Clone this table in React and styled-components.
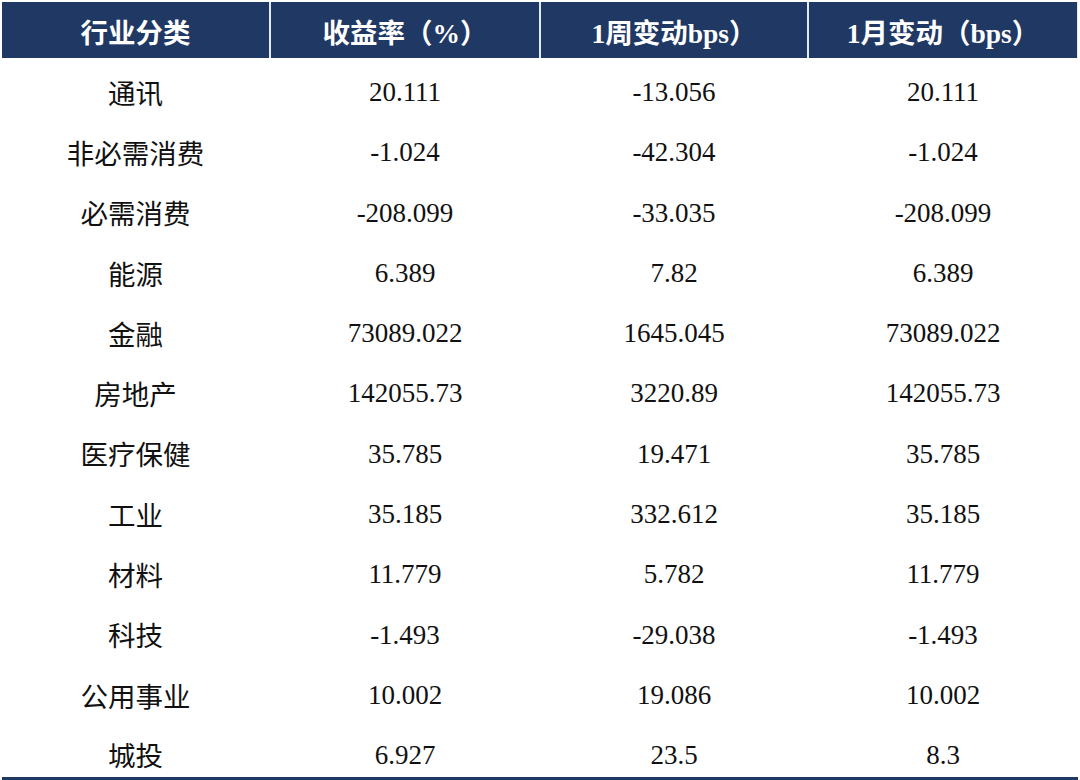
import React from 'react';
import styled, { createGlobalStyle } from 'styled-components';

const GlobalStyle = createGlobalStyle`
  html, body {
    margin: 0;
    padding: 0;
    background: #ffffff;
  }
  body {
    font-family: 'Liberation Serif', 'Noto Sans CJK SC', serif;
  }
`;

const Table = styled.div`
  width: 1080px;
  height: 780px;
  box-sizing: border-box;
  padding: 2px 2px 0 2px;
  display: flex;
  flex-direction: column;
  background: #ffffff;
`;

const HeaderRow = styled.div`
  display: grid;
  grid-template-columns: 267px 268px 266px 268px;
  column-gap: 2px;
  height: 56px;
  background: #e4eaf3;
  flex-shrink: 0;
`;

const HeaderCell = styled.div`
  background: #1f3864;
  color: #ffffff;
  font-family: 'Liberation Serif', 'Noto Sans CJK SC', serif;
  font-weight: bold;
  font-size: 27.5px;
  display: flex;
  align-items: center;
  justify-content: center;
  padding-top: 2px;
  box-sizing: border-box;
`;

const Body = styled.div`
  display: flex;
  flex-direction: column;
  padding-top: 4px;
  border-bottom: 3px solid #1f3864;
`;

const Row = styled.div`
  display: grid;
  grid-template-columns: 267px 268px 266px 268px;
  column-gap: 2px;
  height: 60.3px;
  align-items: center;
  flex-shrink: 0;

  &:last-child {
    height: 52px;
    padding-top: 7px;
    box-sizing: border-box;
  }
`;

const Cell = styled.div`
  text-align: center;
  color: #111111;
  font-size: ${(p) => (p.$name ? '27.5px' : '27px')};
  font-family: ${(p) =>
    p.$name
      ? "'Noto Sans CJK SC', 'Noto Sans', sans-serif"
      : "'Liberation Serif', 'Times New Roman', serif"};
  line-height: 1.2;
`;

const headers = ['行业分类', '收益率（%）', '1周变动bps）', '1月变动（bps）'];

const rows = [
  ['通讯', '20.111', '-13.056', '20.111'],
  ['非必需消费', '-1.024', '-42.304', '-1.024'],
  ['必需消费', '-208.099', '-33.035', '-208.099'],
  ['能源', '6.389', '7.82', '6.389'],
  ['金融', '73089.022', '1645.045', '73089.022'],
  ['房地产', '142055.73', '3220.89', '142055.73'],
  ['医疗保健', '35.785', '19.471', '35.785'],
  ['工业', '35.185', '332.612', '35.185'],
  ['材料', '11.779', '5.782', '11.779'],
  ['科技', '-1.493', '-29.038', '-1.493'],
  ['公用事业', '10.002', '19.086', '10.002'],
  ['城投', '6.927', '23.5', '8.3'],
];

const App = () => {
  return (
    <>
      <GlobalStyle />
      <Table>
        <HeaderRow>
          {headers.map((h) => (
            <HeaderCell key={h}>{h}</HeaderCell>
          ))}
        </HeaderRow>
        <Body>
          {rows.map((r) => (
            <Row key={r[0]}>
              {r.map((v, i) => (
                <Cell key={i} $name={i === 0}>
                  {v}
                </Cell>
              ))}
            </Row>
          ))}
        </Body>
      </Table>
    </>
  );
};

export default App;
